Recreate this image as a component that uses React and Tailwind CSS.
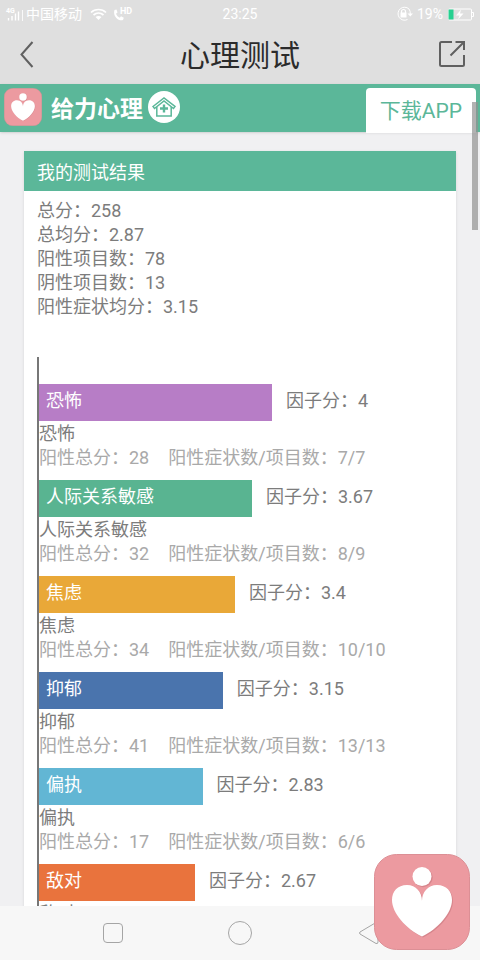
import React from 'react';

const summary = [
  ['总分', '258'],
  ['总均分', '2.87'],
  ['阳性项目数', '78'],
  ['阴性项目数', '13'],
  ['阳性症状均分', '3.15'],
];

const factors = [
  { name: '恐怖', score: '4', total: 28, ratio: '7/7', width: 57.7, color: 'bg-[#b77dc6]' },
  { name: '人际关系敏感', score: '3.67', total: 32, ratio: '8/9', width: 52.7, color: 'bg-[#59b491]' },
  { name: '焦虑', score: '3.4', total: 34, ratio: '10/10', width: 48.5, color: 'bg-[#e9a838]' },
  { name: '抑郁', score: '3.15', total: 41, ratio: '13/13', width: 45.5, color: 'bg-[#4a74ad]' },
  { name: '偏执', score: '2.83', total: 17, ratio: '6/6', width: 40.5, color: 'bg-[#62b6d4]' },
  { name: '敌对', score: '2.67', total: 16, ratio: '6/6', width: 38.6, color: 'bg-[#e9733d]' },
];

const heartPath =
  'M48 47C48 38 42 31 33 31C23.500 31 18 37.500 18 46C18 59 32 75 48 82.500C64 75 78 59 78 46C78 37.500 72.500 31 63 31C54 31 48 38 48 47Z';

function HeartLogo({ className }) {
  return (
    <svg viewBox="0 0 96 96" className={className} aria-hidden="true">
      <rect x="0.5" y="0.5" width="95" height="95" rx="22" fill="#ec9aa0" stroke="#dc8f95" />
      <g fill="#b8686f" opacity="0.4" transform="translate(1 1)">
        <circle cx="48" cy="22.5" r="9.7" />
        <path d={heartPath} />
      </g>
      <g fill="#fff">
        <circle cx="48" cy="22.5" r="9.5" />
        <path d={heartPath} />
      </g>
    </svg>
  );
}

function StatusBar() {
  return (
    <div className="grid h-6 grid-cols-[1fr_auto_1fr] items-center px-1.5 pt-0.5 text-sm leading-6 text-white">
      <div className="flex items-center">
        <div className="flex w-5 flex-col">
          <span className="text-[7px] font-bold leading-[6px]">4G</span>
          <svg className="-mt-1" width="18" height="11" viewBox="0 0 18 11" fill="none" stroke="#fff" aria-hidden="true">
            <path d="M2.500 8V10.500M6 6V10.500M9.500 3.500V10.500M12.500 1.500V10.500" strokeWidth="1.4" />
            <path d="M16.500 0V11" strokeWidth="0.8" />
          </svg>
        </div>
        <span>中国移动</span>
        <svg className="ml-2" width="17" height="13" viewBox="0 0 17 13" fill="none" stroke="#fff" strokeWidth="1.7" aria-hidden="true">
          <path d="M1 4.500C5 0.500 12 0.500 16 4.500M3.500 7C6.500 4.300 10.500 4.300 13.500 7" />
          <path d="M5.500 9C7.500 7.500 9.500 7.500 11.500 9L8.500 12Z" fill="#fff" stroke="none" />
        </svg>
        <div className="ml-1 flex items-start">
          <svg className="ml-0.5 mt-0.5" width="11" height="12" viewBox="0 0 11 12" fill="#fff" aria-hidden="true">
            <path d="M1.500 1L3.500 0.500L4.500 3.500L3 4.800C3.800 6.800 5 8 6.800 8.800L8 7.300L10.800 8.800L10 11C5 12.500 -0.500 6.500 1.500 1Z" />
          </svg>
          <span className="-ml-2 pl-1 text-[9px] font-bold leading-[9px]">HD</span>
        </div>
      </div>
      <time>23:25</time>
      <div className="flex items-center justify-end gap-1">
        <svg width="17" height="16" viewBox="0 0 17 16" fill="none" stroke="#fff" aria-hidden="true">
          <path d="M13 3A6.500 6.500 0 1 0 11.500 13.500M13 3Q14.500 5 14.300 8" strokeWidth="1" />
          <path d="M11.500 7.500H17L14.300 10.500Z" fill="#fff" stroke="none" />
          <rect x="4.500" y="6.500" width="6" height="5" fill="#fff" stroke="none" />
          <path d="M5.500 7V5.500A2 2 0 0 1 9.500 5.500V7" strokeWidth="1.2" />
        </svg>
        <span>19%</span>
        <svg width="27" height="13" viewBox="0 0 27 13" fill="none" aria-hidden="true">
          <rect x="1.500" y="1" width="23" height="11" rx="1" stroke="#fff" />
          <path d="M25 4.500H26.500V8.500H25" stroke="#fff" />
          <rect x="1.500" y="1.500" width="5" height="10" fill="#27d090" />
          <path d="M14 1.500L9 7.500H12.500L11 11.500L16.500 5.500H13Z" fill="#fff" />
        </svg>
      </div>
    </div>
  );
}

function Factor({ item }) {
  return (
    <li className="mb-[10px]">
      <div className="flex h-[37px] gap-[14px]">
        <div
          className={`shrink-0 whitespace-nowrap pl-[7px] pt-[5px] text-white ${item.color}`}
          style={{ width: `${item.width}%` }}
        >
          {item.name}
        </div>
        <div className="whitespace-nowrap pt-[5px]">因子分：{item.score}</div>
      </div>
      <div className="pt-px">{item.name}</div>
      <div className="flex gap-[19px] whitespace-nowrap text-[#a9a9a9]">
        <span>阳性总分：{item.total}</span>
        <span>阳性症状数/项目数：{item.ratio}</span>
      </div>
    </li>
  );
}

export default function App() {
  return (
    <div className="relative flex h-screen flex-col overflow-hidden bg-[#f0f0f2] font-[Roboto,'Noto_Sans_CJK_SC',sans-serif]">
      <header className="shrink-0 bg-[#dfdfdf]">
        <StatusBar />
        <div className="grid h-[60px] grid-cols-[1fr_auto_1fr] items-center px-[14px]">
          <button type="button" aria-label="返回" className="w-8 pl-[6px]">
            <svg width="14" height="27" viewBox="0 0 14 27" fill="none" stroke="#606060" strokeWidth="2" aria-hidden="true">
              <path d="M12.500 1L1.500 13.500L12.500 26" />
            </svg>
          </button>
          <h1 className="pt-1 text-[30px] leading-10 text-[#2b2b2b]">心理测试</h1>
          <button type="button" aria-label="分享" className="justify-self-end">
            <svg width="28" height="28" viewBox="0 0 28 28" fill="none" stroke="#606060" strokeWidth="2" aria-hidden="true">
              <path d="M14 2H3.500A1.500 1.500 0 0 0 2 3.500V24.500A1.500 1.500 0 0 0 3.500 26H24.500A1.500 1.500 0 0 0 26 24.500V15M17.500 2H26V10M26 2L12.500 15.500" />
            </svg>
          </button>
        </div>
      </header>

      <div className="z-10 flex h-12 shrink-0 items-start bg-[#5bb799] pl-1 pr-1 pt-1 shadow">
        <HeartLogo className="h-[38px] w-[38px]" />
        <span className="ml-[9px] text-[23px] font-bold leading-[44px] text-white">给力心理</span>
        <a href="#home" aria-label="首页" className="ml-[5px] mt-[3px]">
          <svg width="32" height="32" viewBox="0 0 32 32" fill="none" aria-hidden="true">
            <circle cx="16" cy="16" r="16" fill="#fff" />
            <g stroke="#5bb799" strokeWidth="1.5">
              <path d="M5 15.500L16 7L27 15.500L25.500 17.500L16 10L6.500 17.500Z" />
              <path d="M8.800 16V25H23.200V16" />
              <path d="M16 13.500V21.500M12 17.500H20" strokeWidth="2.4" />
            </g>
          </svg>
        </a>
        <a href="#download" className="ml-auto h-[45px] rounded-t bg-white px-[14px] text-[21px] leading-[46px] text-[#5bb799]">
          下载APP
        </a>
      </div>

      <main className="min-h-0 flex-1 overflow-hidden px-6 pt-[19px]">
        <section className="bg-white text-lg leading-6 text-[#7c7c7c] shadow">
          <h2 className="h-10 bg-[#5bb799] px-[13px] pt-[10px] leading-6 text-white">我的测试结果</h2>
          <div className="px-[13px] pt-2">
            {summary.map(([label, value]) => (
              <p key={label}>{label}：{value}</p>
            ))}
            <ul className="mt-[38px] border-l-2 border-[#777] pt-[27px]">
              {factors.map((item) => (
                <Factor key={item.name} item={item} />
              ))}
            </ul>
          </div>
        </section>
      </main>

      <nav className="grid h-[54px] shrink-0 grid-cols-[1fr_auto_1fr] items-center bg-[#f7f7f7]">
        <button type="button" aria-label="最近任务" className="ml-[103px] h-5 w-5 rounded-sm border border-[#a5a5a5]" />
        <button type="button" aria-label="主屏幕" className="h-6 w-6 rounded-full border border-[#a5a5a5]" />
        <button type="button" aria-label="返回上一级" className="mr-[101px] justify-self-end">
          <svg width="21" height="24" viewBox="0 0 21 24" fill="none" stroke="#a5a5a5" aria-hidden="true">
            <path d="M2 11L18 1.500Q20 1 20 3V21Q20 23 18 22.500L2 13Q1 12 2 11Z" />
          </svg>
        </button>
      </nav>

      <div className="absolute right-[2px] top-[102px] z-20 h-32 w-[6px] bg-[#929292]/70" />
      <button type="button" aria-label="给力心理" className="absolute bottom-[10px] right-[10px] z-20">
        <HeartLogo className="h-24 w-24" />
      </button>
    </div>
  );
}
